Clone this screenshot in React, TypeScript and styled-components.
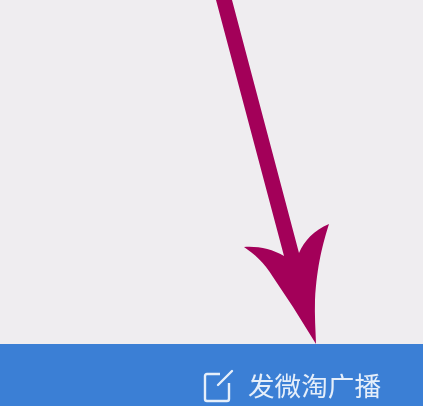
import React from "react";
import styled, { createGlobalStyle } from "styled-components";

const Global = createGlobalStyle`
  html, body { margin: 0; padding: 0; }
  body { background: #efedf0; }
`;

const Screen = styled.div`
  width: 423px;
  height: 406px;
  display: flex;
  flex-direction: column;
  overflow: hidden;
  background: #efedf0;
`;

const Canvas = styled.div`
  flex: 1;
  min-height: 0;
`;

const ArrowArt = styled.svg`
  display: block;
  width: 423px;
  height: 344px;
  filter: blur(0.5px);
`;

const BottomBar = styled.div`
  height: 62px;
  flex: none;
  background: #3b7fd5;
  display: flex;
  align-items: flex-end;
  justify-content: flex-end;
  gap: 14px;
  padding: 0 42px 4px 0;
  box-sizing: border-box;
`;

const ComposeIcon = styled.svg`
  display: block;
  width: 32px;
  height: 34px;
  margin-bottom: -1px;
  filter: blur(0.4px);
`;

const Label = styled.span`
  font-family: "Noto Sans CJK SC", "Noto Sans", sans-serif;
  font-size: 26.6px;
  line-height: 34px;
  font-weight: 400;
  color: #e6effa;
  white-space: nowrap;
  filter: blur(0.4px);
`;

export default function App() {
  return (
    <>
      <Global />
      <Screen>
        <Canvas>
          <ArrowArt viewBox="0 0 423 344">
            <path
              d="M216 0 L232 0 L299 253 C304 241 314 230 329 224 C323 243 317 265 315 300 C314.5 315 315.5 330 316 344 L293 307 L273 277 C264 262 254 254 244 247 C258 246 272 249 284 256 Z"
              fill="#a30059"
            />
          </ArrowArt>
        </Canvas>
        <BottomBar>
          <ComposeIcon viewBox="0 0 32 34" fill="none" stroke="#e6effa" strokeWidth="2.4">
            <path d="M18 5 H5 Q3 5 3 7 V30 Q3 32 5 32 H25 Q27 32 27 30 V14" />
            <path d="M16 16 L30 2" strokeLinecap="round" />
          </ComposeIcon>
          <Label>发微淘广播</Label>
        </BottomBar>
      </Screen>
    </>
  );
}
